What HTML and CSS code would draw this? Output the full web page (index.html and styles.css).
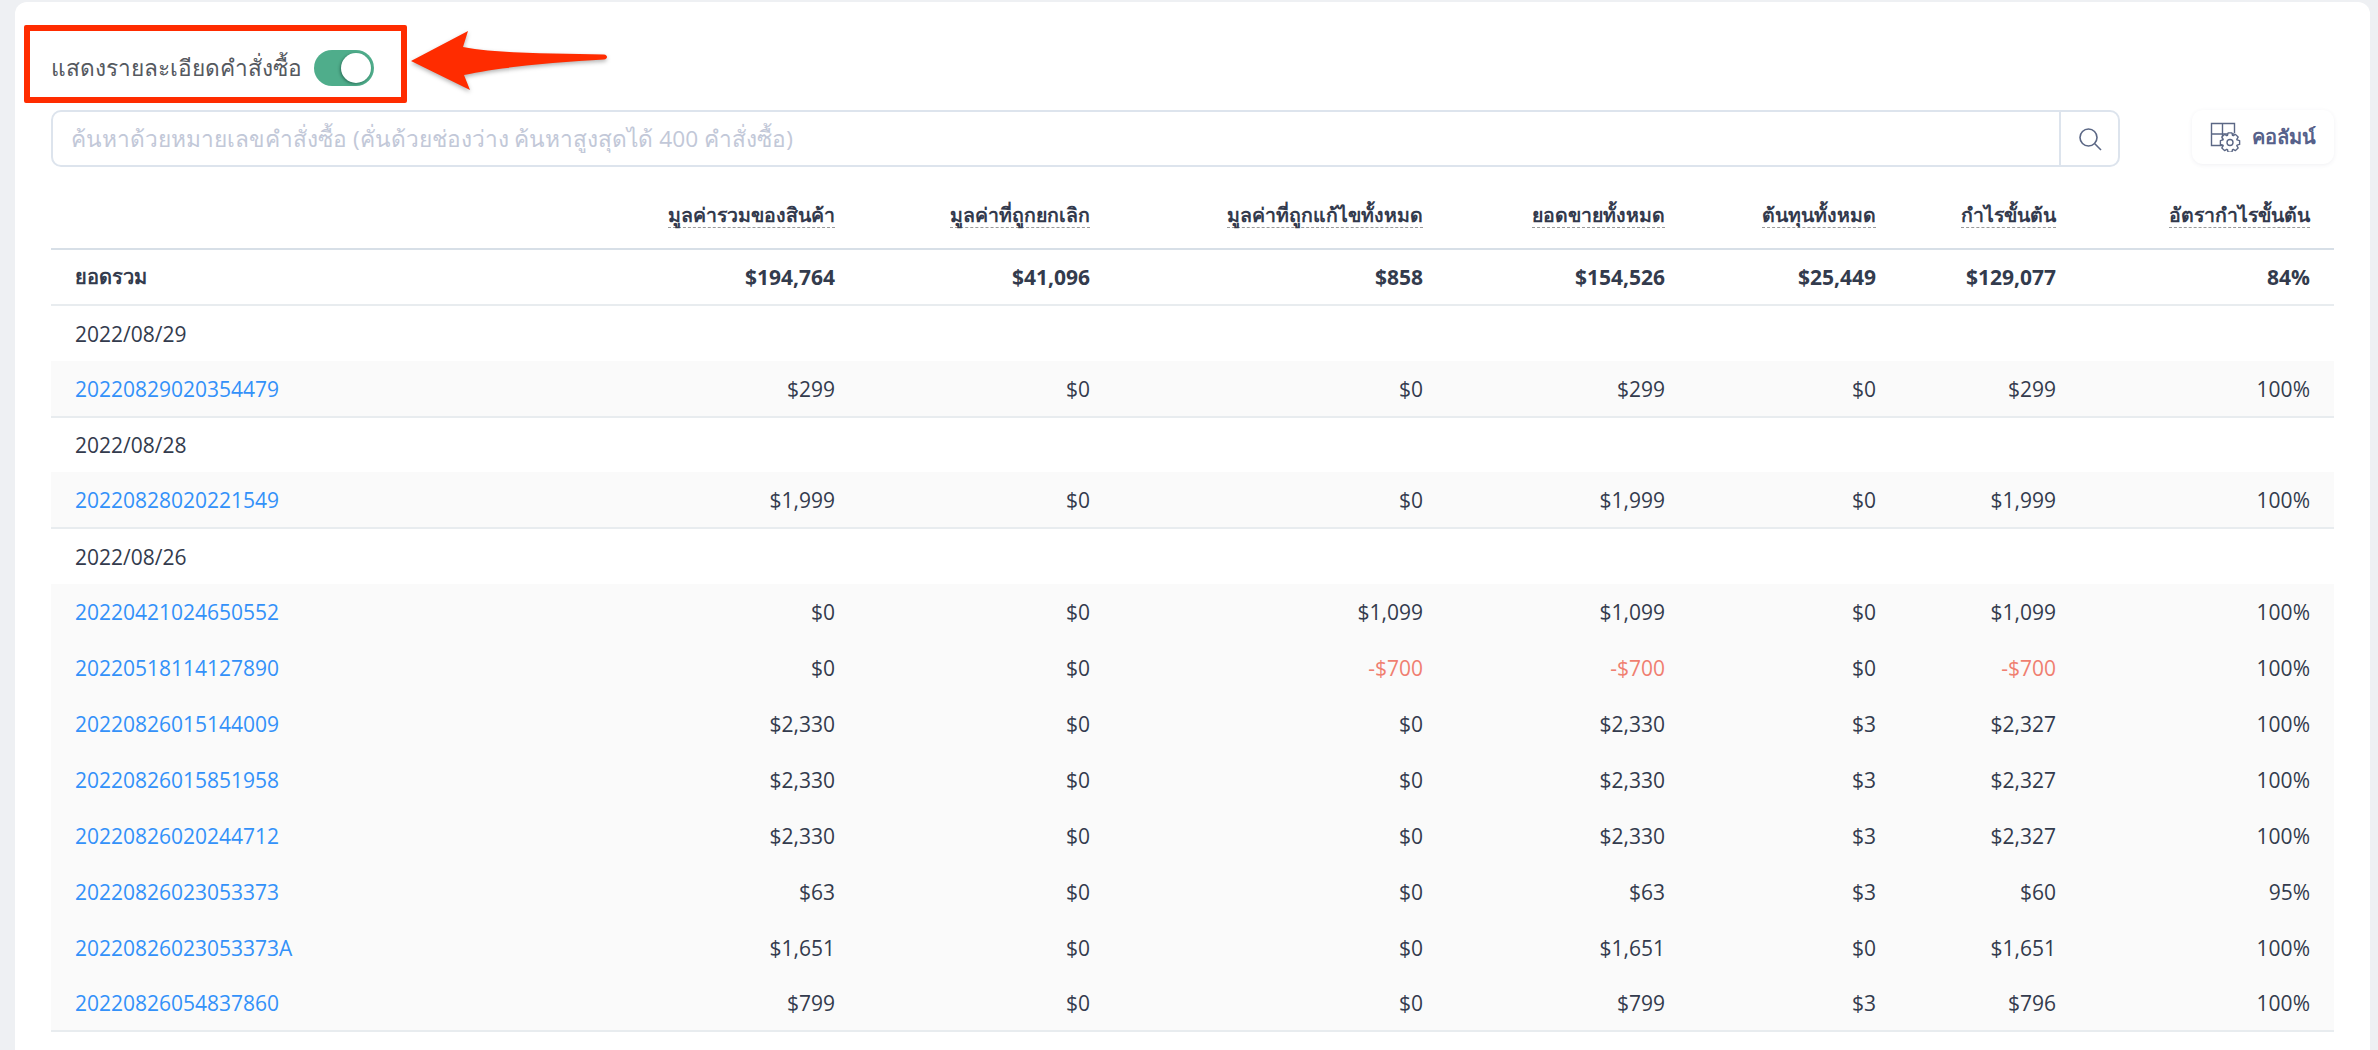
FILE: index.html
```html
<!DOCTYPE html>
<html lang="th">
<head>
<meta charset="utf-8">
<title>รายละเอียดคำสั่งซื้อ</title>
<link rel="stylesheet" href="styles.css">
</head>
<body>
<main class="card">
  <div class="toggle-row">
    <span class="toggle-label">แสดงรายละเอียดคำสั่งซื้อ</span>
    <span class="toggle"><span class="knob"></span></span>
    <span class="highlight"></span>
    <svg class="arrow" viewBox="0 0 204 66" width="204" height="66">
      <path d="M2 31 59 1 54 17C90 24 150 23 195 24.500C199 25 199 29 195 29.500C150 32 90 37 55 45L61 60Z" fill="#ff2c00"/>
    </svg>
  </div>
  <div class="toolbar">
    <div class="search">
      <input class="search-input" type="text" placeholder="ค้นหาด้วยหมายเลขคำสั่งซื้อ (คั่นด้วยช่องว่าง ค้นหาสูงสุดได้ 400 คำสั่งซื้อ)">
      <span class="search-btn">
        <svg viewBox="0 0 24 24" width="24" height="24" fill="none" stroke="#5b6785" stroke-width="1.600"><circle cx="10.500" cy="10.500" r="8.500"/><path d="M16.800 16.800 23 23"/></svg>
      </span>
    </div>
    <div class="col-btn">
      <svg viewBox="0 0 32 30" width="32" height="30" fill="none" stroke="#5b6785" stroke-width="1.400">
        <path d="M14 23.500H1.500V1.500H24.500V11M1.500 12H24.500M12.500 1.500V23.500"/>
        <g transform="translate(20 20.500)"><polygon fill="#fff" points="7.05,-2.56 9.6,-1.9 9.6,1.9 7.05,2.56 6.8,3.17 8.13,5.44 5.44,8.13 3.17,6.8 2.56,7.05 1.9,9.6 -1.9,9.6 -2.56,7.05 -3.17,6.8 -5.44,8.13 -8.13,5.44 -6.8,3.17 -7.05,2.56 -9.6,1.9 -9.6,-1.9 -7.05,-2.56 -6.8,-3.17 -8.13,-5.44 -5.44,-8.13 -3.17,-6.8 -2.56,-7.05 -1.9,-9.6 1.9,-9.6 2.56,-7.05 3.17,-6.8 5.44,-8.13 8.13,-5.44 6.8,-3.17" stroke-linejoin="round"/><circle r="3"/></g>
      </svg>
      <span>คอลัมน์</span>
    </div>
  </div>
  <table class="report">
    <colgroup>
      <col class="c0"><col class="c1"><col class="c2"><col class="c3"><col class="c4"><col class="c5"><col class="c6"><col class="c7">
    </colgroup>
    <thead>
      <tr>
        <th></th>
        <th><span>มูลค่ารวมของสินค้า</span></th>
        <th><span>มูลค่าที่ถูกยกเลิก</span></th>
        <th><span>มูลค่าที่ถูกแก้ไขทั้งหมด</span></th>
        <th><span>ยอดขายทั้งหมด</span></th>
        <th><span>ต้นทุนทั้งหมด</span></th>
        <th><span>กำไรขั้นต้น</span></th>
        <th><span>อัตรากำไรขั้นต้น</span></th>
      </tr>
    </thead>
    <tbody>
      <tr class="total"><td>ยอดรวม</td><td>$194,764</td><td>$41,096</td><td>$858</td><td>$154,526</td><td>$25,449</td><td>$129,077</td><td>84%</td></tr>
      <tr class="date"><td colspan="8">2022/08/29</td></tr>
      <tr class="order end"><td><a href="#">20220829020354479</a></td><td>$299</td><td>$0</td><td>$0</td><td>$299</td><td>$0</td><td>$299</td><td>100%</td></tr>
      <tr class="date"><td colspan="8">2022/08/28</td></tr>
      <tr class="order end"><td><a href="#">20220828020221549</a></td><td>$1,999</td><td>$0</td><td>$0</td><td>$1,999</td><td>$0</td><td>$1,999</td><td>100%</td></tr>
      <tr class="date"><td colspan="8">2022/08/26</td></tr>
      <tr class="order"><td><a href="#">20220421024650552</a></td><td>$0</td><td>$0</td><td>$1,099</td><td>$1,099</td><td>$0</td><td>$1,099</td><td>100%</td></tr>
      <tr class="order"><td><a href="#">20220518114127890</a></td><td>$0</td><td>$0</td><td class="neg">-$700</td><td class="neg">-$700</td><td>$0</td><td class="neg">-$700</td><td>100%</td></tr>
      <tr class="order"><td><a href="#">20220826015144009</a></td><td>$2,330</td><td>$0</td><td>$0</td><td>$2,330</td><td>$3</td><td>$2,327</td><td>100%</td></tr>
      <tr class="order"><td><a href="#">20220826015851958</a></td><td>$2,330</td><td>$0</td><td>$0</td><td>$2,330</td><td>$3</td><td>$2,327</td><td>100%</td></tr>
      <tr class="order"><td><a href="#">20220826020244712</a></td><td>$2,330</td><td>$0</td><td>$0</td><td>$2,330</td><td>$3</td><td>$2,327</td><td>100%</td></tr>
      <tr class="order"><td><a href="#">20220826023053373</a></td><td>$63</td><td>$0</td><td>$0</td><td>$63</td><td>$3</td><td>$60</td><td>95%</td></tr>
      <tr class="order"><td><a href="#">20220826023053373A</a></td><td>$1,651</td><td>$0</td><td>$0</td><td>$1,651</td><td>$0</td><td>$1,651</td><td>100%</td></tr>
      <tr class="order end"><td><a href="#">20220826054837860</a></td><td>$799</td><td>$0</td><td>$0</td><td>$799</td><td>$3</td><td>$796</td><td>100%</td></tr>
    </tbody>
  </table>
</main>
</body>
</html>
```
FILE: styles.css
```css
* { box-sizing: border-box; }
html, body { margin: 0; height: 100%; overflow: hidden; }
body {
  background: #eef0f3;
  padding: 2px 8px 0 15px;
  font-family: "Open Sans", "Noto Sans", sans-serif;
  font-size: 21px;
  color: #333b4d;
}
.card {
  background: #fff;
  border-radius: 12px 12px 0 0;
  height: 1048px;
  padding: 48px 36px 0;
}
.toggle-row {
  position: relative;
  display: flex;
  align-items: center;
  gap: 12px;
  height: 36px;
  margin-bottom: 24px;
}
.toggle-label { color: #55595f; font-family: Roboto, "Open Sans", sans-serif; font-size: 22.700px; }
.toggle {
  position: relative;
  width: 60px;
  height: 36px;
  border-radius: 18px;
  background: #4fad8b;
}
.knob {
  position: absolute;
  top: 3px;
  right: 3px;
  width: 30px;
  height: 30px;
  border-radius: 50%;
  background: #fff;
  box-shadow: -1px 1px 3px rgba(0, 40, 30, .45);
}
.highlight {
  position: absolute;
  left: -27px;
  top: -25px;
  width: 383px;
  height: 78px;
  border: 6px solid #ff2c00;
  border-radius: 2px;
}
.arrow {
  position: absolute;
  left: 358px;
  top: -20px;
  filter: drop-shadow(0 2px 2px rgba(0, 0, 0, .3));
}
.toolbar { display: flex; align-items: flex-start; gap: 72px; }
.search {
  flex: 1;
  display: flex;
  height: 57px;
  border: 2px solid #dde4ed;
  border-radius: 10px;
}
.search-input {
  flex: 1;
  border: 0;
  outline: 0;
  background: none;
  padding: 0 18px;
  font: inherit;
  font-size: 22.700px;
}
.search-input::placeholder { color: #c2c8d8; opacity: 1; }
.search-btn {
  width: 59px;
  display: flex;
  align-items: center;
  justify-content: center;
  border-left: 2px solid #dde4ed;
}
.col-btn {
  width: 142px;
  height: 54px;
  display: flex;
  align-items: center;
  gap: 10px;
  padding-left: 18px;
  border-radius: 11px;
  box-shadow: 0 1px 4px rgba(60, 70, 100, .08);
  color: #56618a;
  font-size: 20px;
  font-weight: 700;
  white-space: nowrap;
}
.report {
  width: 100%;
  table-layout: fixed;
  border-collapse: collapse;
}
.c0 { width: 500px; }
.c1 { width: 308px; }
.c2 { width: 255px; }
.c3 { width: 333px; }
.c4 { width: 242px; }
.c5 { width: 211px; }
.c6 { width: 180px; }
.c7 { width: 254px; }
.report th {
  height: 82px;
  padding: 0 24px 20px;
  text-align: right;
  vertical-align: bottom;
  font-weight: 700;
  font-size: 19.500px;
  color: #333a4d;
  border-bottom: 2px solid #d7dfe7;
}
.report th span {
  display: inline-block;
  line-height: 24px;
  border-bottom: 1.500px dashed #9a9a9a;
}
.report td {
  height: 55.850px;
  padding: 1px 24px 0;
  text-align: right;
  white-space: nowrap;
}
.report td:first-child { text-align: left; }
.total td { font-weight: 700; border-bottom: 2px solid #e8ecef; }
.total td:first-child { font-size: 20px; }
.order td { background: #fafafa; }
.order.end td { border-bottom: 2px solid #e8ecef; }
.report a { color: #3391f9; text-decoration: none; }
.report .neg { color: #f07f70; }
```
